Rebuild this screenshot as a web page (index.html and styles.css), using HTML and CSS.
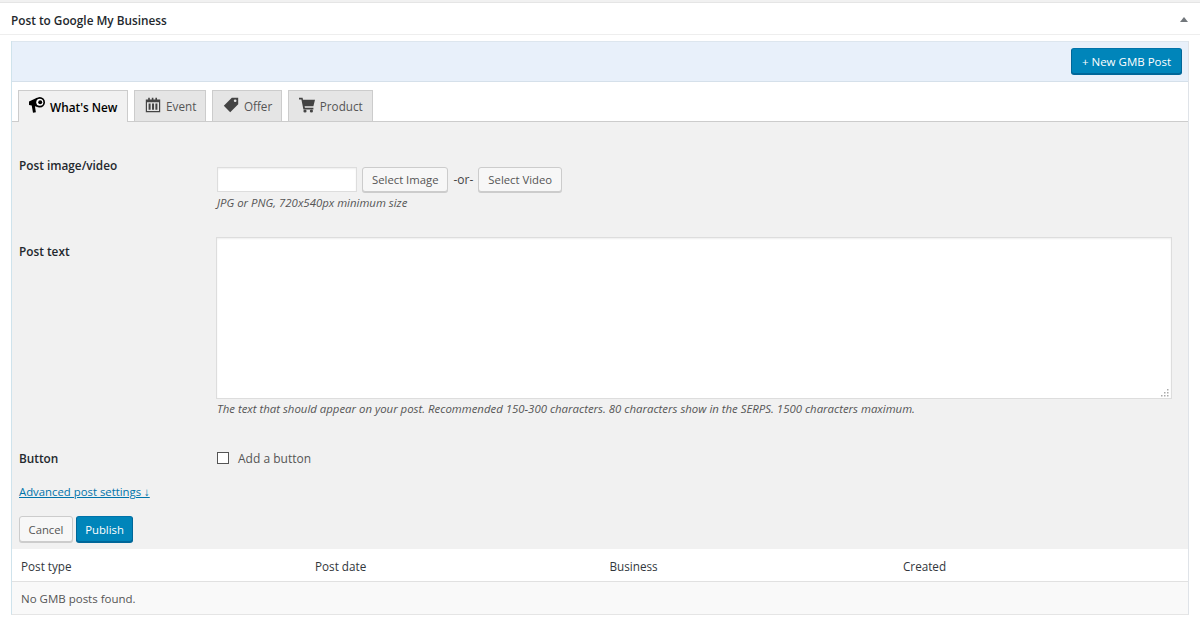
FILE: index.html
```html
<!DOCTYPE html>
<html lang="en">

<head>
  <meta charset="UTF-8">
  <title>Post to Google My Business</title>
  <link rel="stylesheet" href="styles.css">
</head>

<body>
  <div class="postbox">
    <div class="postbox-head">
      <h2>Post to Google My Business</h2>
      <span class="toggle"></span>
    </div>
    <div class="inside">
      <div class="toolbar">
        <a class="button primary new-post" href="#">+ New GMB Post</a>
      </div>
      <div class="tabs">
        <a class="tab active" href="#">
          <svg class="icon" viewBox="0 0 20 20">
            <path d="M0 5.500 10 .8v11.500L7.400 11.600 8.600 19 5 19.800 3.400 10.500 0 10z" />
            <circle cx="13.500" cy="6.500" r="6.500" />
            <circle cx="13.500" cy="6.500" r="4.400" fill="#fff" />
            <circle cx="14" cy="6.500" r="2.500" />
          </svg>
          What's New
        </a>
        <a class="tab" href="#">
          <svg class="icon" viewBox="0 0 20 20">
            <path fill-rule="evenodd" d="M1 3h3V1h2v2h2.500V1h2v2h2.500V1h2v2H19v16H1zM2.500 6.500v11h15v-11zM4.500 8H7v8H4.500zM8.800 8h2.500v8H8.800zM13 8h2.500v8H13z" />
          </svg>
          Event
        </a>
        <a class="tab" href="#">
          <svg class="icon" viewBox="0 0 20 20">
            <path fill-rule="evenodd" d="M11 1h8v8L9 19 1 11zM15.200 3a1.700 1.700 0 1 0 0 3.400 1.700 1.700 0 0 0 0-3.400z" />
          </svg>
          Offer
        </a>
        <a class="tab" href="#">
          <svg class="icon" viewBox="0 0 20 20">
            <path d="M0 1h4.500l.5 2.500H20l-2 8H7l.4 1.800H18V15.500H5.500L3 3H0z" />
            <circle cx="7.500" cy="17.500" r="2" />
            <circle cx="15.500" cy="17.500" r="2" />
          </svg>
          Product
        </a>
      </div>

      <form class="post-form">
        <div class="field field-media">
          <label class="field-label">Post image/video</label>
          <div class="field-body">
            <div class="media-row">
              <input class="media-url" type="text">
              <button class="button" type="button">Select Image</button>
              <span class="or">-or-</span>
              <button class="button" type="button">Select Video</button>
            </div>
            <p class="hint">JPG or PNG, 720x540px minimum size</p>
          </div>
        </div>
        <div class="field field-text">
          <label class="field-label">Post text</label>
          <div class="field-body">
            <div class="text-wrap">
              <textarea class="post-text"></textarea>
              <svg class="grip" viewBox="0 0 8 8">
                <rect x="6" y="0" width="1.500" height="1.500" />
                <rect x="3" y="3" width="1.500" height="1.500" />
                <rect x="6" y="3" width="1.500" height="1.500" />
                <rect x="0" y="6" width="1.500" height="1.500" />
                <rect x="3" y="6" width="1.500" height="1.500" />
                <rect x="6" y="6" width="1.500" height="1.500" />
              </svg>
            </div>
            <p class="hint">The text that should appear on your post. Recommended 150-300 characters. 80 characters show in the SERPS. 1500 characters maximum.</p>
          </div>
        </div>
        <div class="field field-button">
          <label class="field-label">Button</label>
          <div class="field-body">
            <label class="check"><input type="checkbox"> Add a button</label>
          </div>
        </div>
        <a class="advanced" href="#">Advanced post settings ↓</a>
        <div class="actions">
          <button class="button" type="button">Cancel</button>
          <button class="button primary" type="button">Publish</button>
        </div>
      </form>

      <div class="posts">
        <div class="posts-row posts-head">
          <span>Post type</span>
          <span>Post date</span>
          <span>Business</span>
          <span>Created</span>
        </div>
        <div class="posts-empty">No GMB posts found.</div>
      </div>
    </div>
  </div>
</body>

</html>
```

FILE: styles.css
```css
* {
  box-sizing: border-box;
}

body {
  margin: 0;
  height: 626px;
  overflow: hidden;
  background: #f1f1f1;
  color: #444;
  font-family: "Open Sans", "Noto Sans", sans-serif;
  font-size: 12px;
}

.postbox {
  margin-top: 2px;
  height: 624px;
  background: #fff;
  border-top: 1px solid #e5e5e5;
}

.postbox-head {
  display: flex;
  align-items: center;
  justify-content: space-between;
  height: 32px;
  padding: 2px 11px 0;
  border-bottom: 1px solid #eee;
}

.postbox-head h2 {
  margin: 0;
  color: #23282d;
  font-size: 11.800px;
  font-weight: 600;
}

.toggle {
  width: 0;
  height: 0;
  margin-right: 1px;
  border-left: 4px solid transparent;
  border-right: 4px solid transparent;
  border-bottom: 5px solid #72777c;
}

.inside {
  margin: 6px 11px 0;
  border-left: 1px solid #cfe3ec;
  border-right: 1px solid #dfe3e8;
  border-bottom: 1px solid #e5e5e5;
}

.toolbar {
  display: flex;
  justify-content: flex-end;
  height: 41px;
  padding: 6px 6px 0 0;
  background: #e8f0fa;
  border-top: 1px solid #dde6ee;
  border-bottom: 1px solid #d5e0ea;
}

.button {
  display: inline-flex;
  align-items: center;
  justify-content: center;
  height: 26px;
  padding: 0 9px;
  background: #f7f7f7;
  border: 1px solid #ccc;
  border-radius: 3px;
  box-shadow: 0 1px 0 #ccc;
  color: #555;
  font-family: inherit;
  font-size: 11.300px;
  text-decoration: none;
}

.button.primary {
  background: #0085ba;
  border-color: #0073aa #006799 #006799;
  box-shadow: 0 1px 0 #006799;
  color: #fff;
}

.new-post {
  width: 111px;
  font-size: 11.500px;
}

.tabs {
  display: flex;
  gap: 5.600px;
  height: 40px;
  padding: 8px 0 0 6px;
  background: #fff;
  border-bottom: 1px solid #ccc;
}

.tab {
  display: flex;
  align-items: center;
  gap: 5px;
  height: 31px;
  padding: 0 9px 0 10px;
  background: #e5e5e5;
  border: 1px solid #ccc;
  border-bottom: 0;
  color: #555;
  font-size: 11.700px;
  text-decoration: none;
}

.tab.active {
  height: 32px;
  padding-right: 10px;
  background: #f1f1f1;
  color: #000;
  font-size: 11.800px;
  font-weight: 600;
}

.icon {
  width: 16px;
  height: 16px;
  margin-top: -3px;
  fill: #444;
}

.tab.active .icon {
  fill: #000;
}

.post-form {
  height: 427px;
  padding: 0 7px;
  background: #f1f1f1;
}

.field {
  display: flex;
}

.field-label {
  flex: 0 0 198px;
  color: #23282d;
  font-size: 11.800px;
  font-weight: 600;
}

.field-body {
  flex: 1;
}

.field-media {
  height: 115px;
  padding-top: 35px;
}

.media-row {
  display: flex;
  align-items: center;
  height: 26px;
  margin-top: 9px;
}

.media-row .button {
  height: 25px;
}

.media-url {
  width: 140px;
  height: 25px;
  margin: 0 5px 0 0;
  background: #fff;
  border: 1px solid #ddd;
  box-shadow: inset 0 1px 2px rgba(0, 0, 0, 0.07);
}

.or {
  padding: 0 5px;
  font-size: 12px;
}

.hint {
  margin: 3px 0 0;
  color: #555;
  font-size: 11.400px;
  font-style: italic;
}

.field-text {
  height: 211px;
}

.field-text .field-label {
  padding-top: 6px;
}

.text-wrap {
  position: relative;
  width: 956px;
  height: 162px;
  margin-left: -1px;
}

.post-text {
  display: block;
  width: 100%;
  height: 100%;
  resize: none;
  background: #fff;
  border: 1px solid #ddd;
  box-shadow: inset 0 1px 2px rgba(0, 0, 0, 0.07);
}

.grip {
  position: absolute;
  right: 3px;
  bottom: 2px;
  width: 8px;
  height: 8px;
  fill: #aaa;
}

.field-text .hint {
  margin-top: 2px;
}

.field-button {
  align-items: center;
  height: 20px;
}

.check {
  display: flex;
  align-items: center;
  gap: 9px;
  font-size: 12px;
  color: #555;
}

.check input {
  appearance: none;
  width: 12px;
  height: 12px;
  margin: 0;
  background: #fff;
  border: 1px solid #555;
}

.advanced {
  display: block;
  margin-top: 16px;
  color: #0073aa;
  font-size: 11.350px;
}

.actions {
  display: flex;
  gap: 3px;
  margin-top: 17px;
}

.actions .button {
  width: 54px;
}

.actions .primary {
  width: 57px;
}

.posts {
  background: #fff;
}

.posts-row {
  display: grid;
  grid-template-columns: 294px 294.500px 293.500px 1fr;
  align-items: center;
  height: 33px;
  padding: 2px 9px 0;
  border-bottom: 1px solid #e1e1e1;
  color: #32373c;
  font-size: 11.700px;
}

.posts-empty {
  display: flex;
  align-items: center;
  height: 32px;
  padding: 1px 9px 0;
  background: #f9f9f9;
  color: #555;
  font-size: 11.500px;
}
```
